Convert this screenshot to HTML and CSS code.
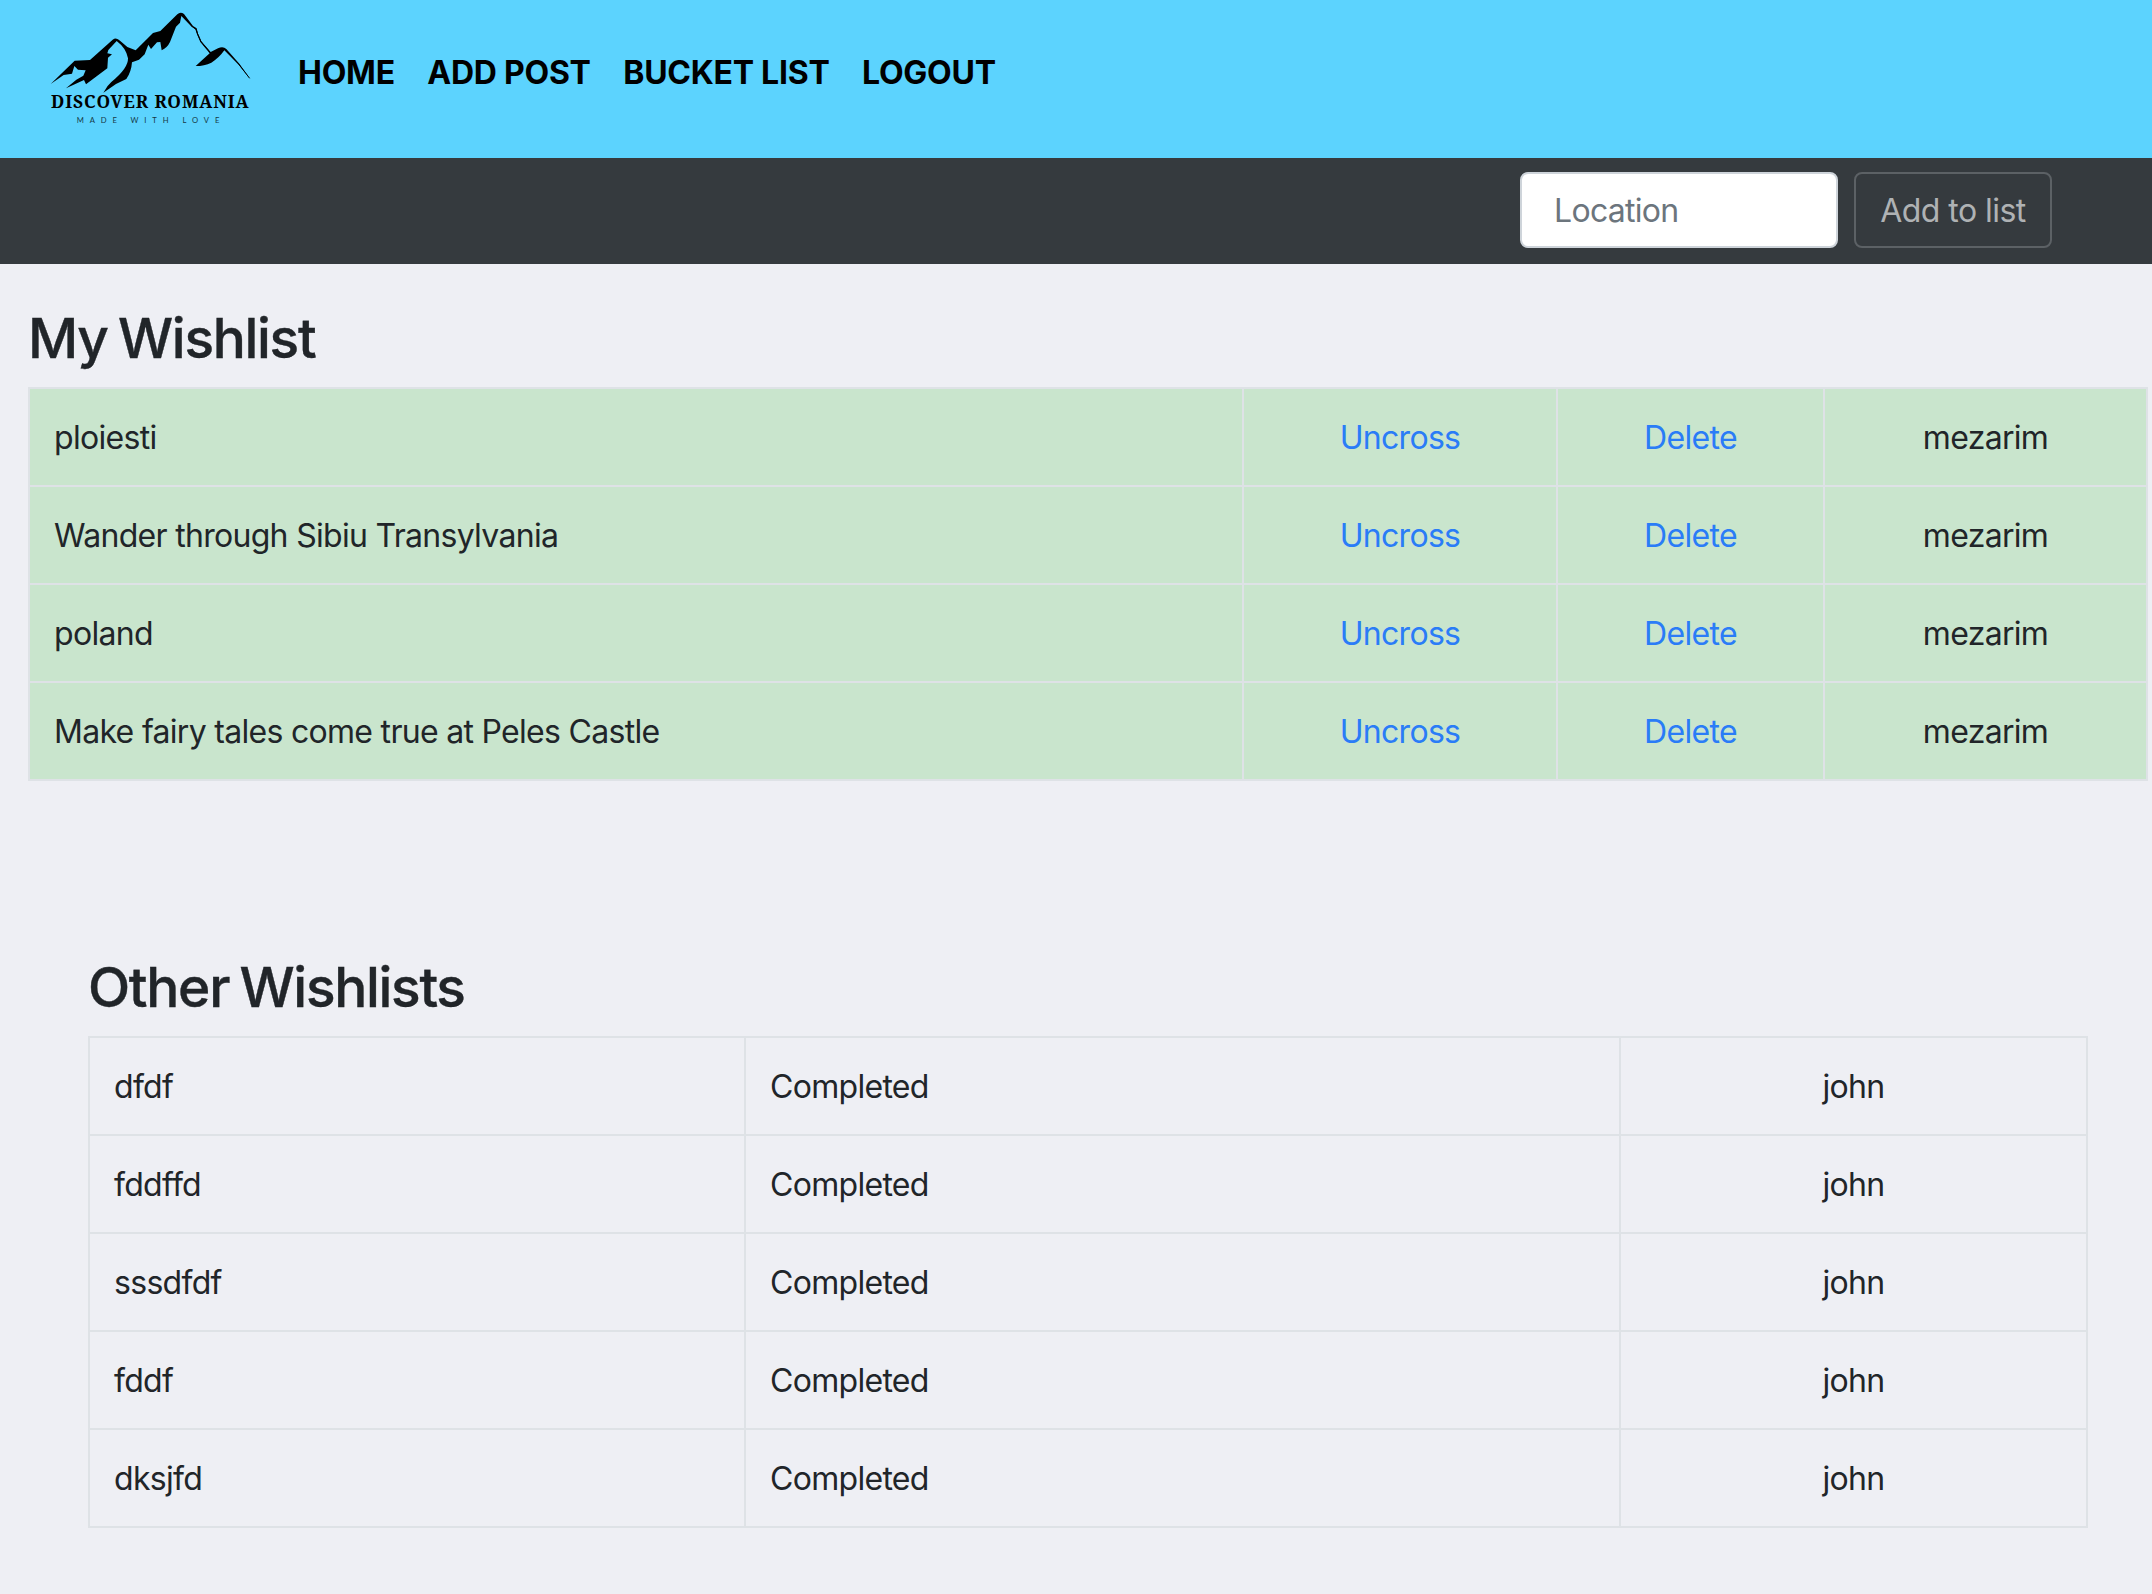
FILE: index.html
```html
<!DOCTYPE html>
<html lang="en">
<head>
<meta charset="utf-8">
<title>Discover Romania - Bucket List</title>
<link rel="stylesheet" href="styles.css">
</head>
<body>
<header class="site-header">
  <svg class="logo" viewBox="0 0 720 420" role="img" aria-label="Discover Romania">
    <path d="M62 252 L134 182 L180 180 L248 119 Q259 110 271 123 L292 141 L317 151 L369 99 L391 93 L442 43 Q451 34 462 42 L489 78 L500 85 L504 101 L514 124 L542 156 L564 145 Q579 137 589 147 L628 191 L660 236 L624 192 L583 151 Q567 174 544 188 Q523 198 497 198 L539 160 L511 126 L501 103 L496 88 L485 80 L454 48 L450 68 L438 80 L420 126 Q412 143 395 151 L391 126 L381 127 L363 147 L355 134 L344 163 L327 179 L306 187 Q304 216 289 237 L258 252 L220 278 Q231 257 244 246 Q295 205 294 175 Q289 145 260 123 L235 150 L232 160 L246 163 L234 173 L232 205 L200 229 L168 253 L162 240 L108 265 L139 239 L160 227 L167 211 L144 209 L133 198 L126 221 L101 225 Z"/>
    <path class="ridge" d="M456 43 L488 81 L498 87 L503 102 L513 125 L541 158 M583 147 L626 192 L659 235"/>
    <text class="logo-name" x="63" y="325" textLength="593">DISCOVER ROMANIA</text>
    <text class="logo-tagline" x="140" y="369" textLength="428">MADE WITH LOVE</text>
  </svg>
  <nav class="main-nav">
    <a href="#">HOME</a>
    <a href="#">ADD POST</a>
    <a href="#">BUCKET LIST</a>
    <a href="#">LOGOUT</a>
  </nav>
</header>
<form class="add-bar">
  <input class="location" type="search" placeholder="Location" aria-label="Location">
  <button class="add-button" type="button">Add to list</button>
</form>
<main>
  <section class="mine">
    <h2>My Wishlist</h2>
    <table class="list done">
      <colgroup><col class="place"><col class="cross"><col class="delete"><col class="user"></colgroup>
      <tr><td>ploiesti</td><td class="mid"><a href="#">Uncross</a></td><td class="mid"><a href="#">Delete</a></td><td class="mid">mezarim</td></tr>
      <tr><td>Wander through Sibiu Transylvania</td><td class="mid"><a href="#">Uncross</a></td><td class="mid"><a href="#">Delete</a></td><td class="mid">mezarim</td></tr>
      <tr><td>poland</td><td class="mid"><a href="#">Uncross</a></td><td class="mid"><a href="#">Delete</a></td><td class="mid">mezarim</td></tr>
      <tr><td>Make fairy tales come true at Peles Castle</td><td class="mid"><a href="#">Uncross</a></td><td class="mid"><a href="#">Delete</a></td><td class="mid">mezarim</td></tr>
    </table>
  </section>
  <section class="others">
    <h2>Other Wishlists</h2>
    <table class="list">
      <colgroup><col class="other-place"><col class="status"><col class="owner"></colgroup>
      <tr><td>dfdf</td><td>Completed</td><td class="mid">john</td></tr>
      <tr><td>fddffd</td><td>Completed</td><td class="mid">john</td></tr>
      <tr><td>sssdfdf</td><td>Completed</td><td class="mid">john</td></tr>
      <tr><td>fddf</td><td>Completed</td><td class="mid">john</td></tr>
      <tr><td>dksjfd</td><td>Completed</td><td class="mid">john</td></tr>
    </table>
  </section>
</main>
</body>
</html>
```
FILE: styles.css
```css
*, *::before, *::after { box-sizing: border-box; }

body {
  margin: 0;
  background: #eeeff4;
  color: #212529;
  font: 400 32px/48px Inter, "Liberation Sans", sans-serif;
  letter-spacing: -0.7px;
}

a { color: #2a7cf7; text-decoration: none; }

.site-header {
  display: flex;
  align-items: flex-start;
  height: 158px;
  padding-left: 30px;
  background: #5cd3fe;
}

.logo { width: 240px; height: 140px; flex: none; }

.ridge { fill: none; stroke: #000; stroke-width: 3; }

.logo-name {
  font: 700 52px "Noto Serif", "Liberation Serif", serif;
  letter-spacing: 0;
}

.logo-tagline {
  font: 400 23px Lato, sans-serif;
  letter-spacing: 0;
  opacity: 0.75;
}

.main-nav {
  display: flex;
  gap: 32.5px;
  padding: 49px 0 0 28px;
  letter-spacing: -0.25px;
}

.main-nav a { color: #000; font-weight: 700; }

.add-bar {
  display: flex;
  justify-content: flex-end;
  gap: 16px;
  height: 106px;
  margin: 0;
  padding: 14px 100px 16px 0;
  background: #353a3e;
}

.location,
.add-button {
  height: 76px;
  margin: 0;
  border-radius: 8px;
  font: inherit;
  letter-spacing: inherit;
}

.location {
  width: 318px;
  padding: 12px 34px 12px 32px;
  border: 2px solid #ced4da;
  background: #fff;
  appearance: none;
}

.location::placeholder { color: #6c757d; opacity: 1; }

.add-button {
  width: 198px;
  padding: 13px 0 11px;
  border: 2px solid #5c6165;
  background: transparent;
  color: #afb2b4;
  letter-spacing: -0.55px;
}

h2 {
  margin: 0 0 15px;
  font-size: 55px;
  font-weight: 500;
  line-height: 67px;
  letter-spacing: -1.3px;
  word-spacing: -3px;
  -webkit-text-stroke: 0.4px currentColor;
}

.mine { padding: 41px 4px 0 28px; }
.others { padding: 173px 64px 0 88px; }

.list {
  width: 100%;
  table-layout: fixed;
  border-collapse: collapse;
}

.list td {
  padding: 25px 24px 23px;
  border: 2px solid #dee2e6;
}

.done td { background: #c9e5cd; }
.mid { text-align: center; }

.place { width: 1214px; }
.cross { width: 314px; }
.delete { width: 267px; }
.user { width: 323px; }

.other-place { width: 656px; }
.status { width: 875px; }
.owner { width: 467px; }
```
